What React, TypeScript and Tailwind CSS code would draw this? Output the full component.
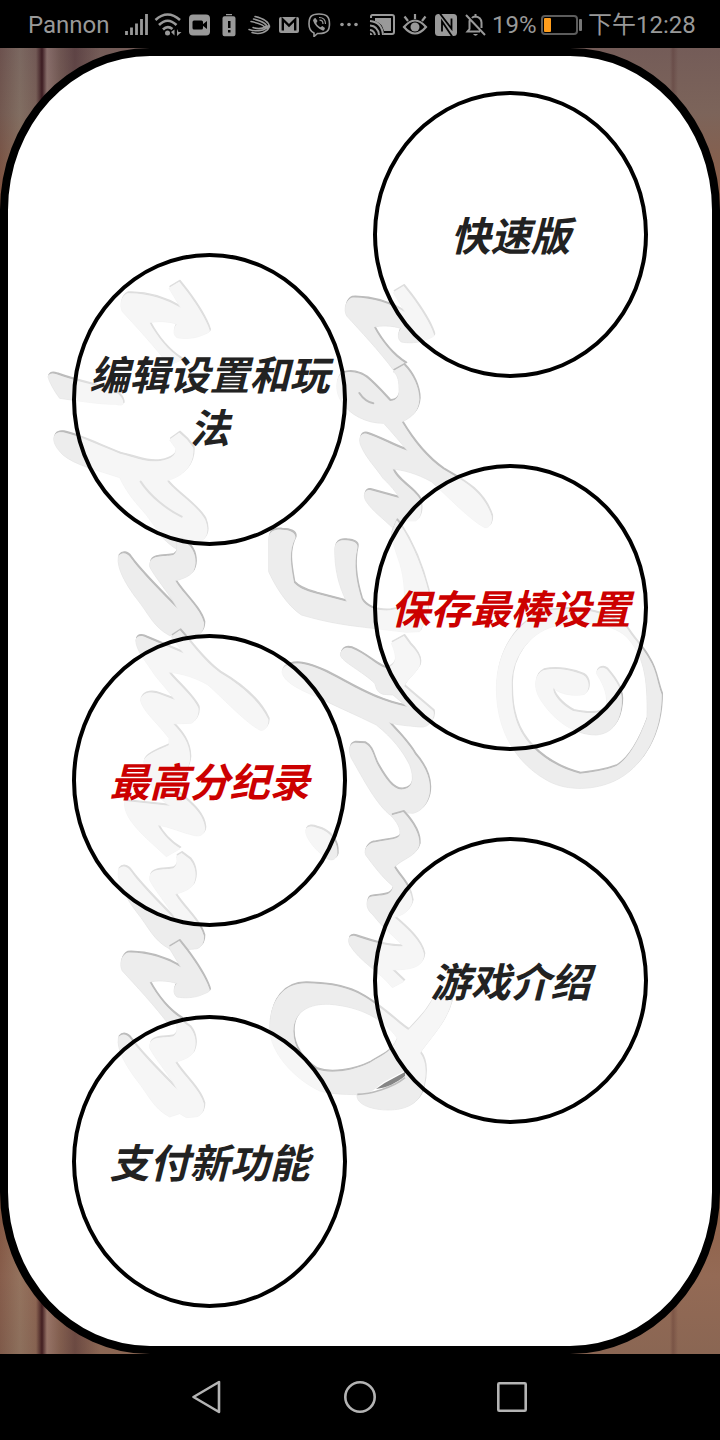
import type { ReactNode } from 'react';

const LOOP =
  'M388 80L418 62L440 90C470 130 498 175 508 205Q511 212 504 214L490 220C465 232 430 232 412 228C400 220 400 200 412 188C385 178 350 178 328 184C350 225 385 270 425 295L388 312C350 260 285 190 248 150C238 130 245 105 262 97C320 95 380 115 425 142Z';
const HOOK =
  'M330 905C335 880 380 888 400 882C412 875 414 860 410 845L425 836L450 855C470 880 470 910 460 930C450 945 420 955 405 958C430 1000 480 1040 492 1085C492 1110 480 1122 465 1122L440 1124L420 1112L390 1122C340 1095 330 1060 290 1010C260 970 230 920 236 885C245 872 262 875 272 890C300 930 370 1000 415 1045C400 1010 340 940 330 915Z';
const BAR =
  'M25 345C30 335 40 336 50 340C100 358 160 372 190 380C230 390 250 405 250 428C245 432 235 430 228 428C180 428 130 420 60 410C45 390 28 360 25 345Z';
const LETTER_Y =
  'M42 530C45 515 55 512 70 514C120 525 180 555 240 578C290 590 320 605 360 600C395 595 412 580 408 560L390 535L418 515L440 535L460 560C462 600 445 640 380 658C400 690 470 730 495 775C505 800 505 820 490 835C478 838 468 834 455 836L410 862C390 850 370 830 360 820C345 790 330 775 320 760C290 725 265 700 240 648C170 625 105 610 70 580C50 560 42 545 42 530Z';
const LETTER_N =
  'M288 -5C292 -18 308 -16 320 -10L434 38L395 -15L420 -32C450 0 490 60 540 95C600 130 660 180 685 235C686 255 675 268 662 266C620 245 560 180 505 130C470 110 430 95 385 92C400 115 460 165 475 200C478 225 465 240 455 245L398 247C425 275 450 305 450 350C450 380 420 420 410 450C440 480 490 510 495 560C495 580 480 585 465 582C430 575 390 555 352 550C370 585 400 610 420 622L380 645L320 590C290 560 250 520 255 480L395 495C350 470 320 420 312 360C315 340 360 325 388 312L388 290C350 240 310 210 302 175C310 150 340 152 360 160L408 178C380 140 360 120 345 100C320 60 290 30 288 -5Z';
const LETTER_E =
  'M430 300L462 282C490 310 508 350 508 385C505 420 490 435 455 452C490 510 530 560 580 595C640 630 700 660 725 735C727 755 720 770 705 768C660 745 590 670 545 630C500 605 460 595 427 592C440 630 490 650 510 685C518 715 512 740 498 748L440 748L430 770C400 740 370 720 350 690C338 672 345 655 360 657L450 682C440 660 420 640 400 620C380 590 350 560 335 525C325 505 330 485 350 488C390 500 430 525 475 540C455 515 425 480 402 455C350 455 300 430 275 390C255 360 258 320 275 308C300 298 330 305 350 320C380 345 410 380 420 390C440 390 450 375 448 350C448 320 440 305 430 300Z';
const FORK =
  'M57 800C58 780 75 775 95 776C120 776 138 785 136 800C115 840 122 880 132 935C150 955 180 962 200 968L292 992C265 940 255 890 255 830C258 808 275 806 290 808C310 810 325 815 322 830C310 880 318 930 335 985C350 1010 380 1020 420 1018L460 1010C470 960 460 900 445 860C435 830 425 800 425 785L440 748L450 760C490 820 520 900 535 960C540 1010 525 1050 510 1080L470 1082L370 1070C300 1062 240 1055 155 1030C110 1000 75 940 57 900Z';
const LETTER_K =
  'M97 1200C100 1180 130 1175 155 1178C250 1195 330 1280 475 1308L430 1270L400 1268C378 1260 380 1245 375 1235C340 1200 275 1170 272 1150C275 1130 290 1128 305 1132C350 1150 380 1185 410 1192C440 1180 445 1160 425 1115L462 1095L480 1120C505 1145 515 1165 508 1185C490 1215 470 1225 462 1245L550 1320C555 1340 540 1370 510 1366C470 1362 440 1360 415 1352C440 1380 480 1420 495 1450C530 1490 545 1530 538 1570C530 1605 510 1620 490 1625L460 1623L425 1633C380 1600 340 1520 305 1460C295 1435 298 1418 315 1415L345 1417C370 1430 370 1460 385 1485C405 1520 430 1560 460 1555C490 1550 495 1520 480 1480C460 1440 430 1400 380 1360C320 1330 260 1305 200 1275C150 1255 100 1230 97 1200Z';
const LETTER_M =
  'M425 403L460 393C490 425 510 460 508 490C500 525 460 530 432 558C450 590 480 610 487 660C480 690 460 700 432 708C470 740 515 780 522 820C520 850 500 865 425 865L462 900L428 918C390 870 330 840 300 790C292 770 300 762 315 765C360 780 420 800 462 795C440 770 400 740 370 700C345 680 350 655 360 648C390 640 425 650 430 615L428 612C400 590 370 550 348 520C340 500 360 485 375 484C420 475 445 475 450 462C455 440 440 420 425 403Z';
const DOT =
  'M168 445C172 435 185 434 200 440C240 450 265 480 262 520C258 535 245 537 235 532C205 515 165 470 168 445Z';
const LETTER_D =
  'M60 1040C60 960 100 905 170 907C290 910 330 935 390 980C430 1010 450 1030 475 1047C510 1010 540 980 560 930L605 960C590 1020 550 1060 510 1115C530 1140 530 1180 520 1220C510 1265 470 1285 415 1285C370 1285 320 1270 322 1240L370 1238C330 1240 250 1240 210 1228C130 1190 60 1110 60 1040ZM130 1050C130 1100 160 1140 200 1165C240 1180 310 1170 360 1145C400 1120 430 1110 443 1070C400 1010 330 975 240 968C180 965 130 990 130 1050Z';
const RING =
  'M50 290C50 180 110 90 200 60C290 45 380 60 440 110C465 150 490 170 508 205C530 240 530 270 545 310C545 430 490 530 400 570C330 600 250 595 200 565C120 520 50 430 50 290ZM95 290C95 360 110 420 160 470C200 510 250 535 300 548C330 545 370 540 410 525C450 500 480 440 502 380C505 250 490 190 440 135C390 90 300 90 220 105C150 125 90 200 95 290Z';
const LETTER_C =
  'M350 245C352 230 370 226 380 235C410 270 430 300 425 340C420 390 400 425 350 430C270 430 210 370 180 320C160 285 165 250 190 238C230 228 280 238 310 252C330 265 330 295 315 308C290 315 240 310 220 288C215 310 250 345 280 360C330 370 370 370 380 345C385 300 365 270 350 245Z';

const strokes: { d: string; x: number; y: number }[] = [
  { d: LOOP, x: 0, y: 0 },
  { d: BAR, x: 0, y: 0 },
  { d: LETTER_Y, x: 0, y: 0 },
  { d: HOOK, x: 0, y: 0 },
  { d: LETTER_N, x: 0, y: 1140 },
  { d: HOOK, x: 0, y: 940 },
  { d: LOOP, x: 0, y: 1978 },
  { d: HOOK, x: 0, y: 1444 },
  { d: LOOP, x: 673, y: 13 },
  { d: LETTER_E, x: 630, y: 30 },
  { d: FORK, x: 630, y: 30 },
  { d: LETTER_K, x: 630, y: 30 },
  { d: LETTER_M, x: 630, y: 1260 },
  { d: DOT, x: 630, y: 1260 },
  { d: LETTER_D, x: 630, y: 1260 },
  { d: RING, x: 1320, y: 990 },
  { d: LETTER_C, x: 1320, y: 990 },
];

function Watermark() {
  return (
    <svg
      className="pointer-events-none absolute inset-0 h-full w-full"
      viewBox="0 0 704 1290"
      preserveAspectRatio="none"
      aria-hidden="true"
    >
      <g transform="translate(32 205) scale(0.33333)" fillRule="evenodd" strokeLinejoin="round">
        {strokes.map((s, i) => (
          <g key={i} transform={`translate(${s.x} ${s.y})`}>
            <path d={s.d} transform="translate(2 -4)" fill="#bcbcbc" stroke="#bcbcbc" strokeWidth="4" />
            <path d={s.d} transform="translate(-1 2)" fill="#ededed" stroke="#e2e2e2" strokeWidth="2" />
            <path d={s.d} fill="#ededed" />
          </g>
        ))}
        <g fill="none" stroke="#bcbcbc" strokeWidth="6" strokeLinecap="round">
          <path d="M302 662C330 705 380 745 425 767" />
          <path d="M958 396Q975 422 1000 427" />
        </g>
        <path d="M1000 2488L1030 2464L1095 2429L1095 2446C1070 2474 1035 2488 985 2496Z" fill="#fff" />
        <path d="M952 2500C990 2500 1060 2480 1095 2450" fill="none" stroke="#bcbcbc" strokeWidth="5" />
        <path d="M1008 2484L1034 2466L1095 2433L1095 2445C1070 2466 1040 2480 1008 2484Z" fill="#858585" />
      </g>
    </svg>
  );
}

type Option = { label: string; locked?: boolean };

const leftOptions: Option[] = [
  { label: '编辑设置和玩法' },
  { label: '最高分纪录', locked: true },
  { label: '支付新功能' },
];
const rightOptions: Option[] = [
  { label: '快速版' },
  { label: '保存最棒设置', locked: true },
  { label: '游戏介绍' },
];

function OvalButton({ option, shape }: { option: Option; shape: string }) {
  return (
    <button
      type="button"
      className={`flex w-full items-center justify-center rounded-[50%] border-4 border-black bg-white/50 px-3 text-center text-[40px] leading-[53px] font-bold italic ${shape} ${
        option.locked ? 'text-[#cc0000]' : 'text-[#222222]'
      }`}
    >
      <span>{option.label}</span>
    </button>
  );
}

function Glyph({ className, box, children }: { className: string; box: string; children: ReactNode }) {
  return (
    <svg className={`h-6 shrink-0 ${className}`} viewBox={box} fill="none" aria-hidden="true">
      {children}
    </svg>
  );
}

function StatusBar() {
  return (
    <header className="flex h-12 items-center gap-1.5 bg-black pt-0.5 pl-7 font-[Roboto,'Noto_Sans_CJK_SC',sans-serif] text-2xl leading-6 whitespace-nowrap text-[#999999]">
      <span className="w-[90px] shrink-0">Pannon</span>
      <Glyph className="w-6" box="0 0 24 24">
        <path d="M2.5 18v4M7.5 14.500v7.500M12.500 10.500v11.500M17.500 6v16M22.500 1v21" stroke="currentColor" strokeWidth="2.800" />
      </Glyph>
      <Glyph className="w-7" box="0 0 28 24">
        <path d="M1.500 7Q13.500-4 26 7M5 12Q13.500 3.500 22.500 12M9 16.500Q13.500 12 18.500 16" stroke="currentColor" strokeWidth="2.600" />
        <circle cx="13.500" cy="20" r="2.500" fill="currentColor" />
        <path d="M20.500 16.500v6l-3.500-3.500zM23 16v7l4.500-4h-3z" fill="currentColor" />
      </Glyph>
      <Glyph className="w-[22px]" box="0 0 22 24">
        <rect x="1" y="1.500" width="21" height="21" rx="4" fill="currentColor" />
        <rect x="4.500" y="7.500" width="10.500" height="9" rx="1.500" fill="#000" />
        <path d="M14.500 11.500l4.500-3.500v8l-4.500-3.500z" fill="#000" />
      </Glyph>
      <Glyph className="w-[26px]" box="0 0 26 24">
        <path d="M10 1h6v1.200h-6zM8.500 3.200h9q2 0 2 2v16q0 2-2 2h-9q-2 0-2-2v-16q0-2 2-2z" fill="currentColor" />
        <path d="M12 8h2.500v7h-2.500zM12 17h2.500v2.500h-2.500z" fill="#000" />
      </Glyph>
      <Glyph className="w-6" box="0 0 24 24">
        <path
          d="M7 3.500C16 5.500 21 9 21.500 14M5.500 6C14 8 20 11 19.500 16M3 8.500C10 10 16 12 18 15M21.500 13C20 19 12 22 4 19.500M20 13C17 18 9 19 1 16.500M18 13.500C14 16 9 16 5 14.500"
          stroke="currentColor"
          strokeWidth="1.500"
          strokeLinecap="round"
        />
      </Glyph>
      <Glyph className="w-[22px]" box="0 0 22 24">
        <rect x="1" y="4" width="20" height="16" rx="2" fill="currentColor" />
        <path d="M4.800 17.500V6.500L11 12.500L17.200 6.500V17.500" stroke="#000" strokeWidth="2.400" />
      </Glyph>
      <Glyph className="w-[26px]" box="0 0 26 24">
        <path d="M13 1C5 1 3 4 3 11c0 5 1.500 7.500 5 9v3.500l3.500-3H13c8 0 10.500-3 10.500-9.500C23.500 4 21 1 13 1Z" stroke="currentColor" strokeWidth="1.600" />
        <path d="M8 5.500L9.500 5L11.500 8L10.300 10C11 12 12.500 13.500 14.500 14.300L16.300 13L19 15C18.500 17 17.500 18 16.500 17.500C12 15.500 8.500 12 7 7.500Z" fill="currentColor" />
        <path d="M13 4.500c4.500 0 6.500 2.500 6.500 6.500M13.500 7.200c2.500 0 3.500 1.500 3.500 3.800" stroke="currentColor" strokeWidth="1.200" />
      </Glyph>
      <Glyph className="w-5" box="0 0 20 24">
        <circle cx="4" cy="11.500" r="1.800" fill="currentColor" />
        <circle cx="11" cy="11.500" r="1.800" fill="currentColor" />
        <circle cx="18" cy="11.500" r="1.800" fill="currentColor" />
      </Glyph>
      <Glyph className="w-8" box="0 0 32 24">
        <path d="M7 5V3.500Q7 2 8.500 2H28q2 0 2 2V19q0 2-2 2H20" stroke="currentColor" strokeWidth="2" />
        <path d="M11 5h16v13h-7Q18 10 11 8z" fill="currentColor" />
        <path d="M6 8Q18 9 19 22M6 12.500Q14 13 15 22M6 17Q10 17.500 11 22" stroke="currentColor" strokeWidth="2" />
        <path d="M6 19.500Q8.500 20 8.500 22H6z" fill="currentColor" />
      </Glyph>
      <Glyph className="w-[26px]" box="0 0 26 24">
        <path d="M2 14Q13 1 24 14Q13 27 2 14ZM13 6V1M6 8L2.500 3.500M20 8L23.500 3.500" stroke="currentColor" strokeWidth="2.200" />
        <circle cx="13" cy="14" r="4.500" fill="currentColor" />
      </Glyph>
      <Glyph className="w-6" box="0 0 24 24">
        <rect x="1" y="1" width="22" height="22" rx="3.500" fill="currentColor" />
        <path d="M5.500 0L17.500 15.500V5.500M18.500 24L8 8.500V18.500" stroke="#000" strokeWidth="1.800" />
      </Glyph>
      <Glyph className="w-[22px]" box="0 0 22 24">
        <path d="M6 7L5.500 8V16L3.500 18.500H16M8 5Q9 3.500 11.500 3.500Q17 4 17.500 9.500V15M2 2L21 22M11.500 1V4" stroke="currentColor" strokeWidth="2" />
        <path d="M9 21h5q-2.500 3.500-5 0z" fill="currentColor" />
      </Glyph>
      <span className="w-[42px] shrink-0">19%</span>
      <Glyph className="w-[42px]" box="0 0 42 24">
        <rect x="2" y="3" width="35" height="18" rx="3" stroke="#5c5c5c" strokeWidth="2" />
        <rect x="4" y="5" width="7" height="14" rx="1" fill="#ff9d1c" />
        <rect x="39" y="6" width="3" height="12" rx="1" fill="#777777" />
      </Glyph>
      <time>下午12:28</time>
    </header>
  );
}

function NavigationBar() {
  return (
    <nav className="flex h-[86px] items-center justify-center gap-[120px] bg-black text-[#b4b4b4]">
      <button type="button" aria-label="返回">
        <svg className="h-9 w-8" viewBox="0 0 32 36" fill="none" stroke="currentColor" strokeWidth="2.600" strokeLinejoin="round">
          <path d="M27 3V33L1.500 18Z" />
        </svg>
      </button>
      <button type="button" aria-label="主屏幕">
        <svg className="h-9 w-8" viewBox="0 0 32 36" fill="none" stroke="currentColor" strokeWidth="2.600">
          <circle cx="16" cy="18" r="14.700" />
        </svg>
      </button>
      <button type="button" aria-label="最近任务">
        <svg className="h-9 w-8" viewBox="0 0 32 36" fill="none" stroke="currentColor" strokeWidth="2.600">
          <rect x="2.300" y="4.300" width="27.400" height="27.400" rx="1" />
        </svg>
      </button>
    </nav>
  );
}

export default function App() {
  return (
    <div className="flex min-h-screen flex-col bg-black font-['Noto_Sans_CJK_SC',sans-serif]">
      <StatusBar />
      <main className="flex flex-1 flex-col bg-[linear-gradient(90deg,rgba(60,20,20,0.15)_0px,rgba(150,150,130,0.2)_20px,rgba(90,60,60,0.1)_36px,rgba(40,5,15,0.75)_42px,rgba(170,140,140,0.35)_47px,rgba(90,60,60,0.2)_60px,rgba(60,30,40,0.4)_75px,transparent_100px,transparent_670px,rgba(70,30,30,0.25)_673px,transparent_678px),linear-gradient(180deg,#745c58_0%,#7c645a_5%,#8b5d47_11%,#8f6047_88%,#946a55_94%,#8a6653_100%)]">
        <div className="relative flex flex-1 flex-col overflow-hidden rounded-[150px/162px] border-8 border-black bg-white">
          <Watermark />
          <div className="relative grid grid-cols-2 gap-x-[26px] px-16 pt-[35px] pb-[38px]">
            <div className="flex flex-col gap-[88px] pt-[162px]">
              {leftOptions.map((o) => (
                <OvalButton key={o.label} option={o} shape="aspect-[275/293]" />
              ))}
            </div>
            <div className="flex flex-col gap-[86px]">
              {rightOptions.map((o) => (
                <OvalButton key={o.label} option={o} shape="aspect-[275/287]" />
              ))}
            </div>
          </div>
        </div>
      </main>
      <NavigationBar />
    </div>
  );
}
